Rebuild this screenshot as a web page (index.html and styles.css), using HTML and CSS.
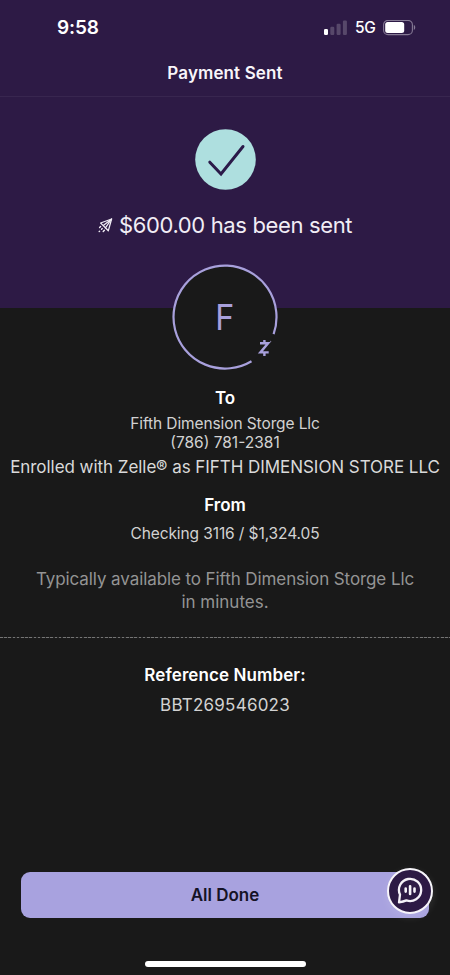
FILE: index.html
```html
<!DOCTYPE html>
<html lang="en">
<head>
<meta charset="utf-8">
<title>Payment Sent</title>
<link rel="stylesheet" href="styles.css">
</head>
<body>
<div class="screen">
  <div class="status">
    <span class="time">9:58</span>
    <div class="status-icons">
      <svg class="signal" width="23" height="16" viewBox="0 0 23 16" fill="#fff">
        <rect x="0" y="9" width="4" height="6" rx="1.2"/>
        <g opacity=".2"><rect x="6.3" y="6.7" width="4" height="8.3" rx="1.2"/><rect x="12.6" y="3.7" width="4" height="11.3" rx="1.2"/><rect x="18.9" y=".5" width="4" height="14.5" rx="1.2"/></g>
      </svg>
      <span class="network">5G</span>
      <svg class="battery" width="33" height="16" viewBox="0 0 33 16">
        <rect x=".6" y=".4" width="28.8" height="14.2" rx="4.4" fill="none" stroke="#867a95" stroke-width="1.1"/>
        <rect x="2.2" y="2.1" width="19" height="10.8" rx="2.5" fill="#fff"/>
        <path d="M30.8 5.1c1.9.6 1.9 4.2 0 4.8z" fill="#867a95"/>
      </svg>
    </div>
  </div>
  <header class="title"><span class="t-title">Payment Sent</span></header>
  <section class="hero">
    <svg class="check" width="61" height="61" viewBox="0 0 61 61">
      <circle cx="30.5" cy="30.5" r="30.3" fill="#aedfdf"/>
      <path d="M14.8 33.2 26 45 48 17.5" fill="none" stroke="#2b1a49" stroke-width="3" stroke-linecap="round"/>
    </svg>
    <div class="amount">
      <svg class="rocket" width="15" height="15" viewBox="0 0 15 15" fill="none" stroke="#f1edf5" stroke-width="1.25" stroke-linecap="round" stroke-linejoin="round">
        <path d="M13.6 1 2.6 5 5.3 7.6 7.4 9.8 10.3 12.8z"/>
        <path d="M5.3 7.6 13.6 1 7.4 9.8"/>
        <path d="M2.6 8.4 1.6 9.4M4.2 10.6 3.6 11.2M1.6 13.2 1.2 13.6M6.4 12.2 5.2 13.5" stroke-width="1.4"/>
      </svg>
      <span class="t-amount">$600.00 has been sent</span>
    </div>
  </section>
  <main class="details">
    <svg class="avatar" width="108" height="108" viewBox="0 0 108 108">
      <circle cx="54" cy="54" r="52" fill="#191919"/>
      <path d="M80.5 98.2A51.5 51.5 0 1 1 102.6 71.1" fill="none" stroke="#a8a0dc" stroke-width="2.2"/>
      <text class="initial" x="53.8" y="67.2" text-anchor="middle" textLength="19" lengthAdjust="spacingAndGlyphs">F</text>
      <path d="M89 80.3h8.1L89.4 89.4h8.3M93.4 77v3M93.4 90v3" fill="none" stroke="#a8a0dc" stroke-width="2.4"/>
      <circle cx="99.6" cy="78.5" r=".7" fill="#77728f"/>
    </svg>
    <h2 class="label to">To</h2>
    <p class="small payee"><span class="t-payee">Fifth Dimension Storge Llc</span></p>
    <p class="small phone">(786) 781-2381</p>
    <p class="enrolled"><span class="t-enrolled">Enrolled with Zelle® as FIFTH DIMENSION STORE LLC</span></p>
    <h2 class="label from">From</h2>
    <p class="small account"><span class="t-payee">Checking 3116 / $1,324.05</span></p>
    <p class="note"><span class="t-note">Typically available to Fifth Dimension Storge Llc</span><br><span>in minutes.</span></p>
    <div class="divider"></div>
    <h2 class="label ref"><span class="t-ref">Reference Number:</span></h2>
    <p class="number"><span class="t-number">BBT269546023</span></p>
  </main>
  <footer class="footer">
    <button class="done">All Done</button>
    <div class="chat">
      <svg width="28" height="28" viewBox="0 0 28 28" fill="none" stroke="#f5f2f8" stroke-linecap="round" stroke-linejoin="round">
        <path d="M3 25.3 4 17.6A11.1 11.1 0 1 1 10.4 23.4Q7.4 24.8 3 25.3z" stroke-width="2.3"/>
        <path d="M9.7 11.6v3M14.1 9.3v7.6M18.5 11.6v3" stroke-width="2.6"/>
      </svg>
    </div>
    <div class="home"></div>
  </footer>
</div>
</body>
</html>
```

FILE: styles.css
```css
* { box-sizing: border-box; }
body { margin: 0; background: #191919; font-family: Inter, "Liberation Sans", sans-serif; }
h2, p { margin: 0; }
.screen { width: 450px; height: 975px; display: flex; flex-direction: column; background: #191919; color: #fff; overflow: hidden; text-align: center; white-space: nowrap; }
.status { height: 50px; flex: none; display: flex; justify-content: space-between; align-items: center; padding: 5px 34px 0 57px; background: #2d1a45; }
.time { font-size: 19px; font-weight: 600; line-height: 24px; letter-spacing: -.1px; }
.status-icons { display: flex; align-items: center; gap: 7.5px; }
.network { font-size: 15.5px; font-weight: 500; line-height: 20px; letter-spacing: -.3px; }
.title { height: 47px; flex: none; background: #2d1a45; border-bottom: 1px solid #38264f; font-size: 17px; font-weight: 600; line-height: 46px; color: #f8f5fa; }
.t-title { letter-spacing: .12px; }
.hero { height: 211px; flex: none; background: #2d1a45; display: flex; flex-direction: column; align-items: center; padding-top: 32px; }
.amount { display: flex; align-items: center; gap: 6px; margin-top: 20px; font-size: 22px; line-height: 30px; color: #f1edf5; }
.t-amount { letter-spacing: -.36px; }
.details { display: flex; flex-direction: column; align-items: center; }
.avatar { flex: none; margin-top: -45px; }
.initial { font-size: 35px; fill: #a8a0dc; }
.label { font-size: 17px; font-weight: 600; line-height: 24px; }
.to { margin-top: 15px; }
.small { font-size: 15.5px; line-height: 19px; color: #d2d2d2; }
.payee { margin-top: 4px; }
.t-payee { letter-spacing: -.1px; }
.enrolled { font-size: 17px; line-height: 24px; margin-top: 3px; color: #dadada; }
.t-enrolled { letter-spacing: -.05px; }
.from { margin-top: 14px; }
.account { margin-top: 7px; }
.note { margin-top: 25px; font-size: 17px; line-height: 23px; color: #949494; }
.t-note { letter-spacing: -.09px; }
.divider { width: 450px; height: 1px; margin-top: 23px; background: repeating-linear-gradient(90deg, #747474 0 2.6px, #2a2a2a 2.6px 4.2px); }
.ref { margin-top: 25px; }
.t-ref { letter-spacing: .1px; }
.number { margin-top: 6px; font-size: 17px; line-height: 24px; color: #d2d2d2; }
.t-number { letter-spacing: .22px; }
.footer { margin-top: auto; height: 103px; flex: none; padding: 0 21px; position: relative; }
.done { width: 408px; height: 46px; display: block; border: 0; border-radius: 9px; background: #a8a2df; color: #151326; font: 600 17px/46px Inter, "Liberation Sans", sans-serif; padding: 0; }
.chat { position: absolute; left: 387px; top: -4px; width: 46px; height: 46px; border-radius: 50%; border: 2px solid #f7f5fa; background: #2d1a45; display: flex; align-items: center; justify-content: center; box-shadow: 0 3px 8px rgba(255,255,255,.12); }
.chat svg { flex: none; }
.home { width: 161px; height: 6px; margin: 43px auto 0; border-radius: 3px; background: #fff; }
```
